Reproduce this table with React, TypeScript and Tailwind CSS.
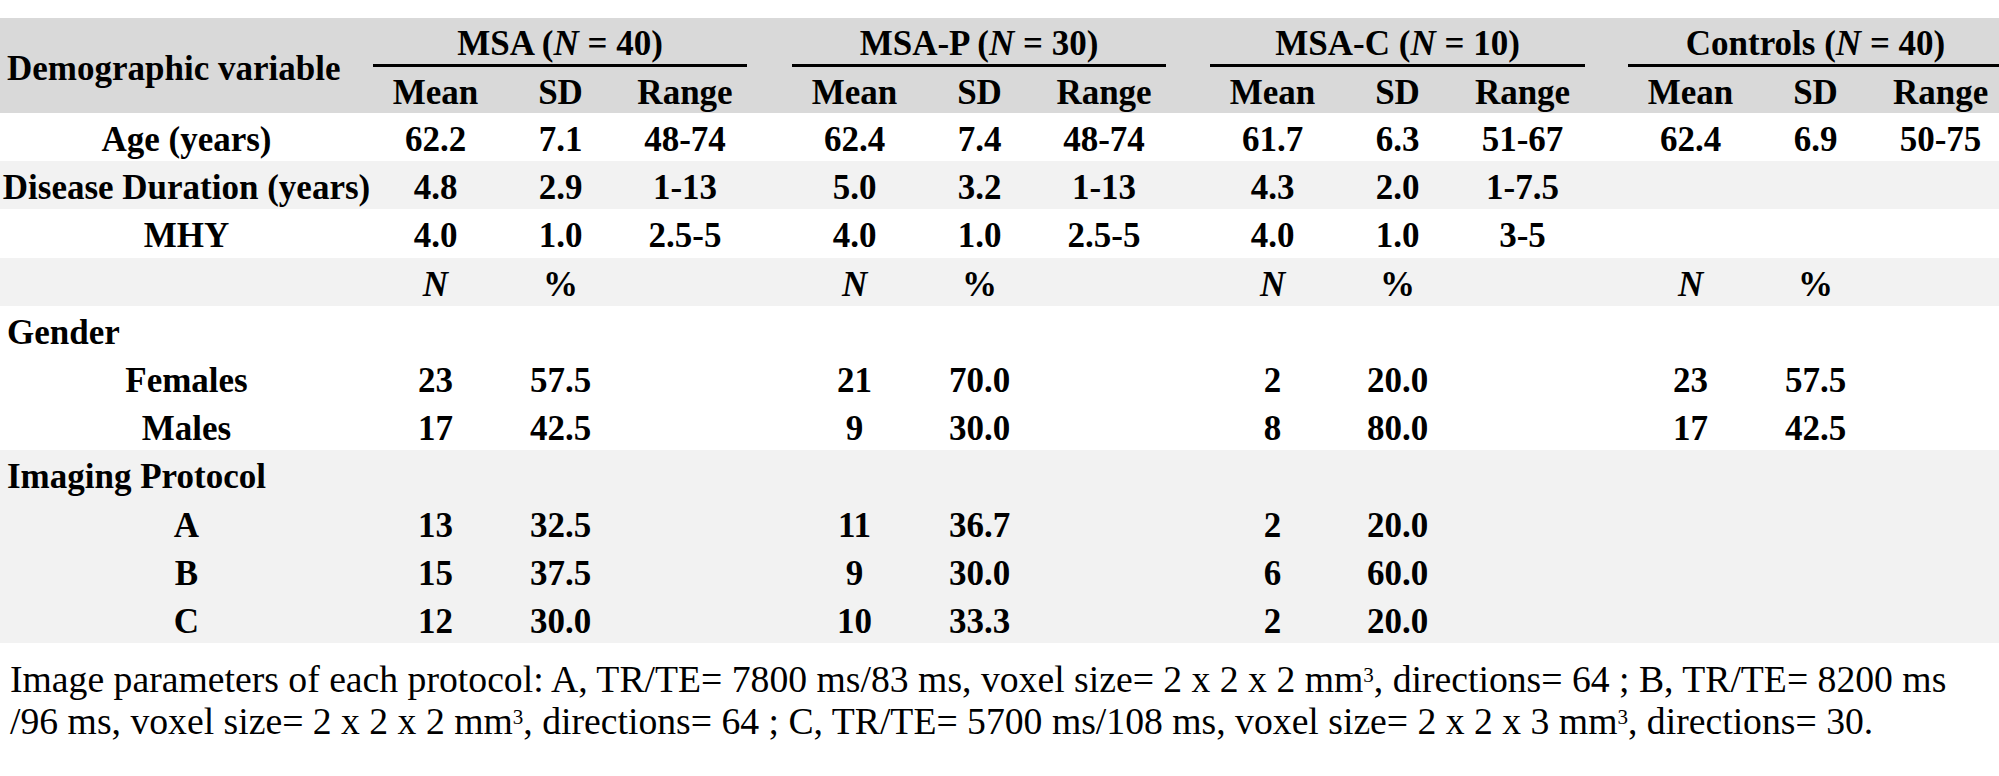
import React from 'react'

const groups = [
  { name: 'MSA', n: 40 },
  { name: 'MSA-P', n: 30 },
  { name: 'MSA-C', n: 10 },
  { name: 'Controls', n: 40 },
]

// column widths: label, then 3 sub-columns per group with a spacer between groups
const colWidths = [
  'w-[373px]',
  'w-[125px]', 'w-[125px]', 'w-[124px]', 'w-[45px]',
  'w-[125px]', 'w-[125px]', 'w-[124px]', 'w-[44px]',
  'w-[125px]', 'w-[125px]', 'w-[125px]', 'w-[43px]',
  'w-[125px]', 'w-[125px]', 'w-[125px]',
]

type Row = {
  label: string
  kind?: 'section' | 'item'
  shade?: boolean
  cells: (React.ReactNode | null)[][]
}

const rows: Row[] = [
  {
    label: 'Age (years)',
    cells: [['62.2', '7.1', '48-74'], ['62.4', '7.4', '48-74'], ['61.7', '6.3', '51-67'], ['62.4', '6.9', '50-75']],
  },
  {
    label: 'Disease Duration (years)',
    shade: true,
    cells: [['4.8', '2.9', '1-13'], ['5.0', '3.2', '1-13'], ['4.3', '2.0', '1-7.5'], []],
  },
  {
    label: 'MHY',
    cells: [['4.0', '1.0', '2.5-5'], ['4.0', '1.0', '2.5-5'], ['4.0', '1.0', '3-5'], []],
  },
  {
    label: '',
    shade: true,
    cells: [0, 1, 2, 3].map(() => [<i key="n">N</i>, '%']),
  },
  { label: 'Gender', kind: 'section', cells: [] },
  { label: 'Females', cells: [['23', '57.5'], ['21', '70.0'], ['2', '20.0'], ['23', '57.5']] },
  { label: 'Males', cells: [['17', '42.5'], ['9', '30.0'], ['8', '80.0'], ['17', '42.5']] },
  { label: 'Imaging Protocol', kind: 'section', shade: true, cells: [] },
  { label: 'A', shade: true, cells: [['13', '32.5'], ['11', '36.7'], ['2', '20.0'], []] },
  { label: 'B', shade: true, cells: [['15', '37.5'], ['9', '30.0'], ['6', '60.0'], []] },
  { label: 'C', shade: true, cells: [['12', '30.0'], ['10', '33.3'], ['2', '20.0'], []] },
]

function BodyRow({ row }: { row: Row }) {
  const out: React.ReactNode[] = []
  groups.forEach((g, gi) => {
    for (let i = 0; i < 3; i++) {
      out.push(
        <td key={`${g.name}-${i}`} className="text-center align-middle pt-[5px] whitespace-nowrap">
          {row.cells[gi]?.[i] ?? null}
        </td>,
      )
    }
    if (gi < groups.length - 1) out.push(<td key={`gap-${gi}`} />)
  })

  return (
    <tr className={`h-[48.2px] ${row.shade ? 'bg-[#f2f2f2]' : 'bg-white'}`}>
      <td
        className={`align-middle pt-[5px] whitespace-nowrap ${
          row.kind === 'section' ? 'text-left pl-[7px]' : 'text-center'
        }`}
      >
        {row.label}
      </td>
      {out}
    </tr>
  )
}

export default function App() {
  return (
    <div className="w-full min-h-screen bg-white overflow-hidden font-['Liberation_Serif','Times_New_Roman',serif] text-black">
      <div className="pt-[18px]">
        <table className="table-fixed w-[2003px] border-separate border-spacing-0 text-[35px] leading-none font-bold">
          <colgroup>
            {colWidths.map((w, i) => (
              <col key={i} className={w} />
            ))}
          </colgroup>
          <thead>
            <tr className="h-[49px] bg-[#d9d9d9]">
              <th rowSpan={2} className="text-left pl-[7px] align-middle pt-[5px] font-bold whitespace-nowrap">
                Demographic variable
              </th>
              {groups.map((g, gi) => (
                <React.Fragment key={g.name}>
                  <th
                    colSpan={3}
                    className="text-center align-middle pt-[4px] font-bold whitespace-nowrap border-b-[3px] border-black"
                  >
                    {g.name} (<i>N</i> = {g.n})
                  </th>
                  {gi < groups.length - 1 && <th />}
                </React.Fragment>
              ))}
            </tr>
            <tr className="h-[46px] bg-[#d9d9d9]">
              {groups.map((g, gi) => (
                <React.Fragment key={g.name}>
                  <th className="text-center align-middle pt-[5px] font-bold">Mean</th>
                  <th className="text-center align-middle pt-[5px] font-bold">SD</th>
                  <th className="text-center align-middle pt-[5px] font-bold">Range</th>
                  {gi < groups.length - 1 && <th />}
                </React.Fragment>
              ))}
            </tr>
          </thead>
          <tbody>
            {rows.map((row, i) => (
              <BodyRow key={i} row={row} />
            ))}
          </tbody>
        </table>
      </div>

      <p className="pl-[10px] pt-[15px] text-[37.7px] leading-[42px] whitespace-nowrap">
        Image parameters of each protocol: A, TR/TE= 7800 ms/83 ms, voxel size= 2 x 2 x 2 mm
        <sup className="text-[21px]">3</sup>, directions= 64 ; B, TR/TE= 8200 ms
        <br />
        /96 ms, voxel size= 2 x 2 x 2 mm<sup className="text-[21px]">3</sup>, directions= 64 ; C, TR/TE= 5700
        ms/108 ms, voxel size= 2 x 2 x 3 mm<sup className="text-[21px]">3</sup>, directions= 30.
      </p>
    </div>
  )
}
